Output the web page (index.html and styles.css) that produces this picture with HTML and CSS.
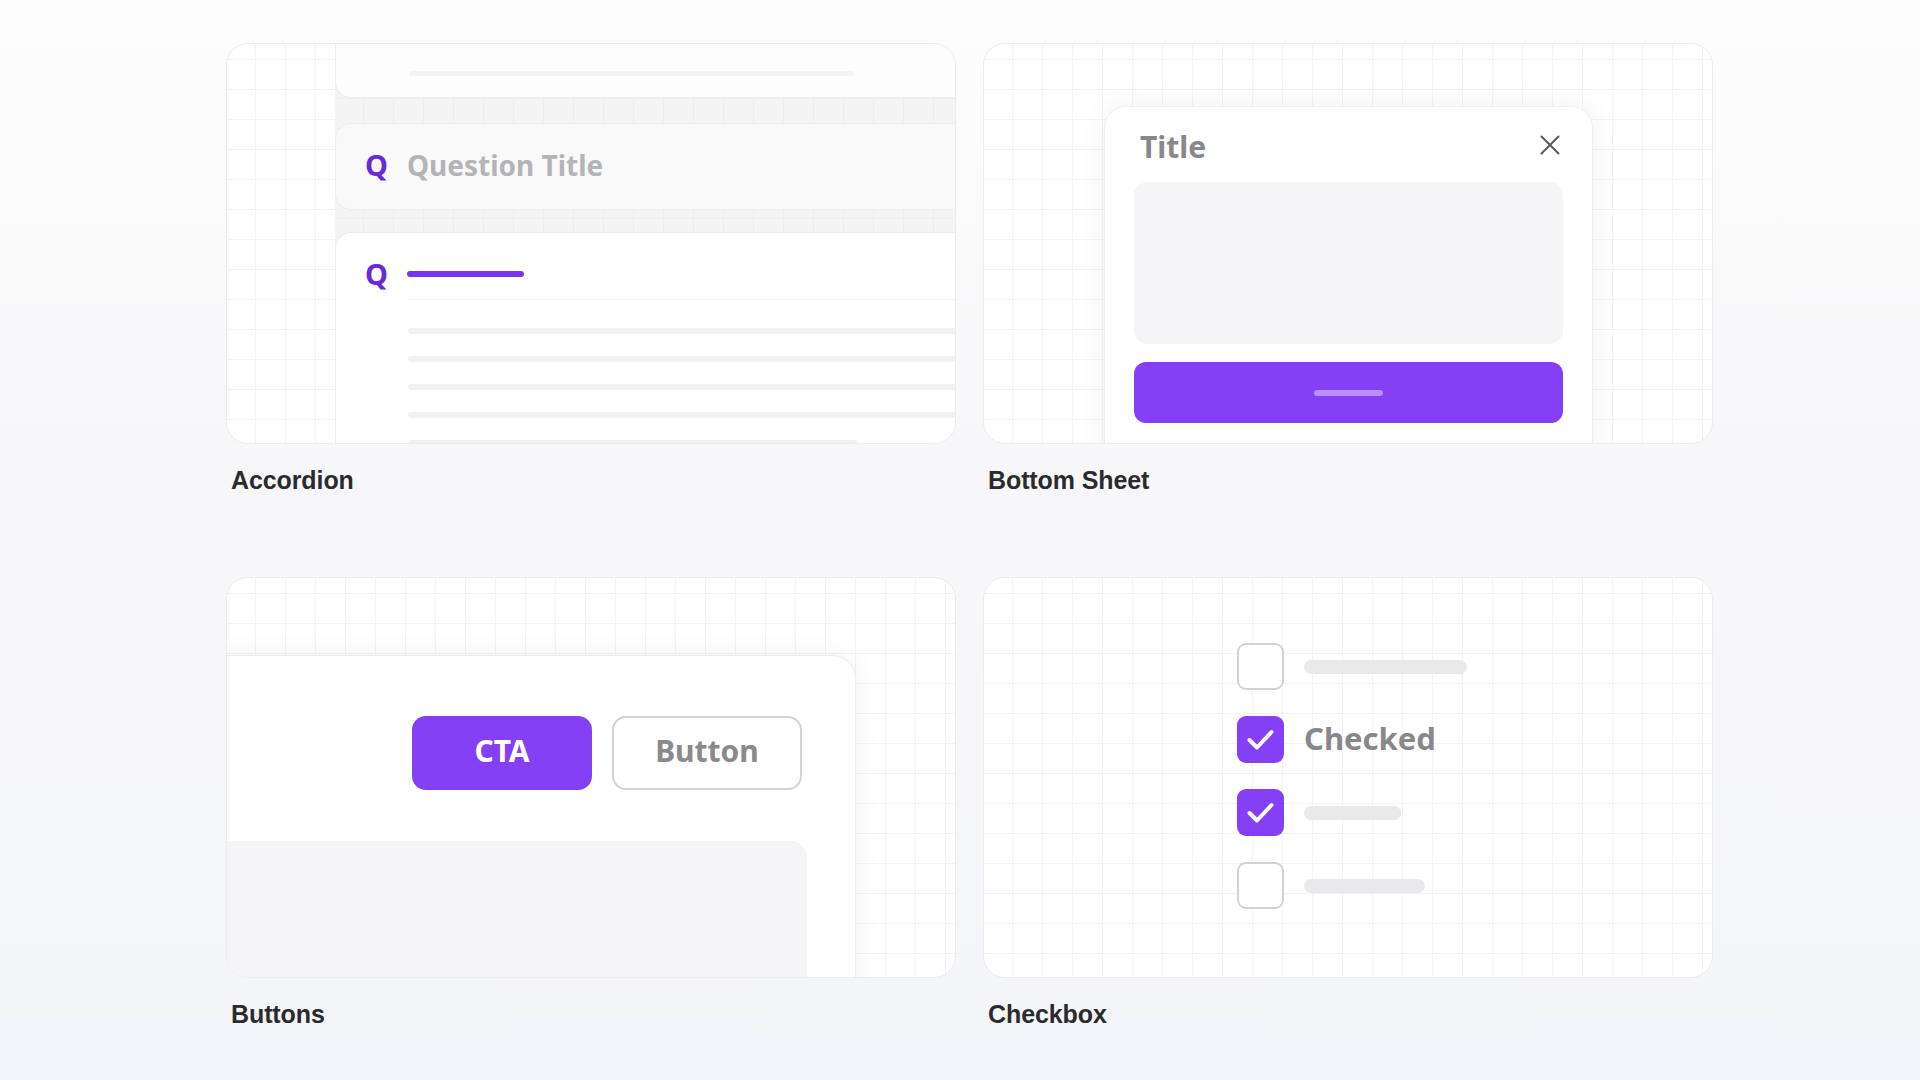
FILE: index.html
```html
<!DOCTYPE html>
<html lang="en">
<head>
<meta charset="utf-8">
<title>Components</title>
<link rel="stylesheet" href="styles.css">
</head>
<body>
<main class="board">
  <section class="tile">
    <div class="card card-accordion">
      <div class="acc-stack">
        <div class="acc-item acc-top"><span class="acc-top-bar"></span></div>
        <div class="acc-item acc-closed">
          <span class="acc-q">Q</span>
          <span class="acc-title">Question Title</span>
        </div>
        <div class="acc-item acc-open">
          <div class="acc-head">
            <span class="acc-q">Q</span>
            <span class="acc-bar"></span>
          </div>
          <div class="acc-divider"></div>
          <div class="acc-lines">
            <span class="acc-line"></span>
            <span class="acc-line"></span>
            <span class="acc-line"></span>
            <span class="acc-line"></span>
            <span class="acc-line acc-line-short"></span>
          </div>
        </div>
      </div>
    </div>
    <p class="label">Accordion</p>
  </section>

  <section class="tile">
    <div class="card card-sheet">
      <div class="sheet">
        <div class="sheet-head">
          <span class="sheet-title">Title</span>
          <svg class="sheet-close" width="20" height="20" viewBox="0 0 20 20" aria-hidden="true">
            <path d="M1.5 1.5 L18.5 18.5 M18.5 1.5 L1.5 18.5" stroke="#5a5a5a" stroke-width="2" stroke-linecap="round" fill="none"/>
          </svg>
        </div>
        <div class="sheet-body"></div>
        <div class="sheet-btn"><span class="sheet-btn-bar"></span></div>
      </div>
    </div>
    <p class="label">Bottom Sheet</p>
  </section>

  <section class="tile">
    <div class="card card-buttons">
      <div class="btn-panel">
        <div class="btn-row">
          <span class="btn btn-cta">CTA</span>
          <span class="btn btn-outline">Button</span>
        </div>
        <div class="btn-box"></div>
      </div>
    </div>
    <p class="label">Buttons</p>
  </section>

  <section class="tile">
    <div class="card card-check">
      <ul class="check-list">
        <li class="check-row">
          <span class="box"></span>
          <span class="check-bar w163"></span>
        </li>
        <li class="check-row">
          <span class="box box-on">
            <svg width="47" height="47" viewBox="0 0 47 47" aria-hidden="true"><path d="M12.5 24 L20 31.5 L34.5 16" stroke="#fff" stroke-width="4" stroke-linecap="round" stroke-linejoin="round" fill="none"/></svg>
          </span>
          <span class="check-text">Checked</span>
        </li>
        <li class="check-row">
          <span class="box box-on">
            <svg width="47" height="47" viewBox="0 0 47 47" aria-hidden="true"><path d="M12.5 24 L20 31.5 L34.5 16" stroke="#fff" stroke-width="4" stroke-linecap="round" stroke-linejoin="round" fill="none"/></svg>
          </span>
          <span class="check-bar w97"></span>
        </li>
        <li class="check-row">
          <span class="box"></span>
          <span class="check-bar w121"></span>
        </li>
      </ul>
    </div>
    <p class="label">Checkbox</p>
  </section>
</main>
</body>
</html>
```

FILE: styles.css
```css
* { box-sizing: border-box; }

html, body {
  margin: 0;
  padding: 0;
}

body {
  width: 1920px;
  height: 1080px;
  overflow: hidden;
  background: linear-gradient(180deg, #fdfdfd 0%, #f8f8fa 35%, #f4f5f8 100%);
  font-family: "Noto Sans", "Open Sans", sans-serif;
}

.board {
  display: grid;
  grid-template-columns: 730px 730px;
  column-gap: 27px;
  row-gap: 82px;
  padding: 43px 0 0 226px;
}

.tile {
  display: flex;
  flex-direction: column;
}

.card {
  height: 401px;
  border-radius: 22px;
  border: 1px solid #ececef;
  overflow: hidden;
  background-color: #ffffff;
  background-image:
    linear-gradient(to right, #f3f3f5 1px, transparent 1px),
    linear-gradient(to bottom, #f3f3f5 1px, transparent 1px);
  background-size: 30px 30px;
  background-position: -2px 15px;
}

.label {
  margin: 21px 0 0 5px;
  font-family: "Liberation Sans", Arial, sans-serif;
  font-weight: 700;
  font-size: 25px;
  line-height: 30px;
  color: #2b2b2d;
  letter-spacing: -0.1px;
}

/* Accordion */
.card-accordion {
  padding-left: 108px;
}

.acc-stack {
  width: 720px;
  margin-top: -21px;
  display: flex;
  flex-direction: column;
  background-color: #f4f4f5;
  background-image:
    linear-gradient(to right, #ededef 1px, transparent 1px),
    linear-gradient(to bottom, #ededef 1px, transparent 1px);
  background-size: 30px 30px;
  background-position: -2px 15px;
}

.acc-item {
  border: 1px solid #ededef;
  border-right: 0;
}

.acc-top {
  height: 75px;
  background: #fdfdfd;
  border-radius: 0 0 0 16px;
  padding: 47px 0 0 73px;
}

.acc-top-bar {
  display: block;
  width: 445px;
  height: 5px;
  border-radius: 3px;
  background: #f4f4f5;
}

.acc-closed {
  margin-top: 25px;
  height: 87px;
  background: #f9f9fa;
  border-radius: 16px 0 0 16px;
  display: flex;
  align-items: center;
  gap: 19px;
  padding: 0 0 4px 29px;
}

.acc-q {
  font-weight: 700;
  font-size: 29px;
  line-height: 1;
  color: #6a2ad6;
}

.acc-title {
  font-weight: 700;
  font-size: 28px;
  line-height: 1;
  color: #b4b4b6;
}

.acc-open {
  margin-top: 22px;
  height: 300px;
  background: #ffffff;
  border-radius: 16px 0 0 0;
}

.acc-head {
  height: 66px;
  padding: 16px 0 0 29px;
  display: flex;
  align-items: center;
  gap: 19px;
}

.acc-head .acc-q {
  height: 46px;
  display: flex;
  align-items: center;
  padding-bottom: 2px;
}

.acc-bar {
  width: 117px;
  height: 6px;
  border-radius: 3px;
  background: #7c35ee;
}

.acc-divider {
  margin-left: 71px;
  border-top: 1px solid #f1f1f2;
}

.acc-lines {
  padding: 28px 0 0 72px;
  display: flex;
  flex-direction: column;
  gap: 22px;
}

.acc-line {
  display: block;
  height: 6px;
  border-radius: 3px;
  background: #f1f1f2;
}

.acc-line-short {
  width: 449px;
}

/* Bottom sheet */
.card-sheet {
  padding: 62px 0 0 120px;
}

.sheet {
  width: 489px;
  height: 380px;
  background: #ffffff;
  border: 1px solid #ededef;
  border-radius: 22px 22px 0 0;
  box-shadow: 0 0 28px rgba(0, 0, 0, 0.06);
  padding: 0 29px;
}

.sheet-head {
  height: 75px;
  padding: 9px 3px 0 6px;
  display: flex;
  align-items: center;
  justify-content: space-between;
}

.sheet-title {
  font-weight: 700;
  font-size: 30px;
  line-height: 1;
  color: #88888a;
  margin-top: -4px;
}

.sheet-close {
  display: block;
  margin-top: -8px;
}

.sheet-body {
  height: 162px;
  border-radius: 14px;
  background: #f5f5f7;
}

.sheet-btn {
  margin-top: 18px;
  height: 61px;
  border-radius: 12px;
  background: #8540f6;
  display: flex;
  align-items: center;
  justify-content: center;
}

.sheet-btn-bar {
  width: 69px;
  height: 6px;
  border-radius: 3px;
  background: #b990f9;
}

/* Buttons */
.card-buttons {
  padding-top: 77px;
}

.btn-panel {
  margin-left: -20px;
  width: 649px;
  height: 360px;
  background: #ffffff;
  border: 1px solid #ededef;
  border-left: 0;
  border-radius: 0 24px 0 0;
  box-shadow: 0 0 26px rgba(0, 0, 0, 0.06);
}

.btn-row {
  display: flex;
  justify-content: flex-end;
  gap: 20px;
  padding: 60px 53px 0 0;
}

.btn {
  height: 74px;
  border-radius: 14px;
  display: flex;
  align-items: center;
  justify-content: center;
  font-weight: 700;
  font-size: 30px;
  line-height: 1;
  padding-bottom: 4px;
}

.btn-cta {
  width: 180px;
  background: #8540f6;
  color: #ffffff;
}

.btn-outline {
  width: 190px;
  background: #ffffff;
  border: 2px solid #d3d3d5;
  color: #8a8a8c;
}

.btn-box {
  margin: 51px 48px 0 0;
  height: 200px;
  border-radius: 0 16px 0 0;
  background: #f5f5f7;
}

/* Checkbox */
.card-check {
  padding: 65px 0 0 253px;
}

.check-list {
  list-style: none;
  margin: 0;
  padding: 0;
  display: flex;
  flex-direction: column;
  gap: 26px;
}

.check-row {
  display: flex;
  align-items: center;
  gap: 20px;
  height: 47px;
}

.box {
  width: 47px;
  height: 47px;
  border-radius: 9px;
  border: 2px solid #d3d3d5;
  background: #ffffff;
  flex: none;
}

.box-on {
  border: 0;
  background: #8540f6;
}

.box-on svg {
  display: block;
}

.check-bar {
  height: 14px;
  border-radius: 7px;
  background: #e9e9eb;
}

.w163 { width: 163px; }
.w97 { width: 97px; }
.w121 { width: 121px; }

.check-text {
  font-weight: 700;
  font-size: 31px;
  line-height: 1;
  color: #88888a;
  padding-bottom: 3px;
}
```
